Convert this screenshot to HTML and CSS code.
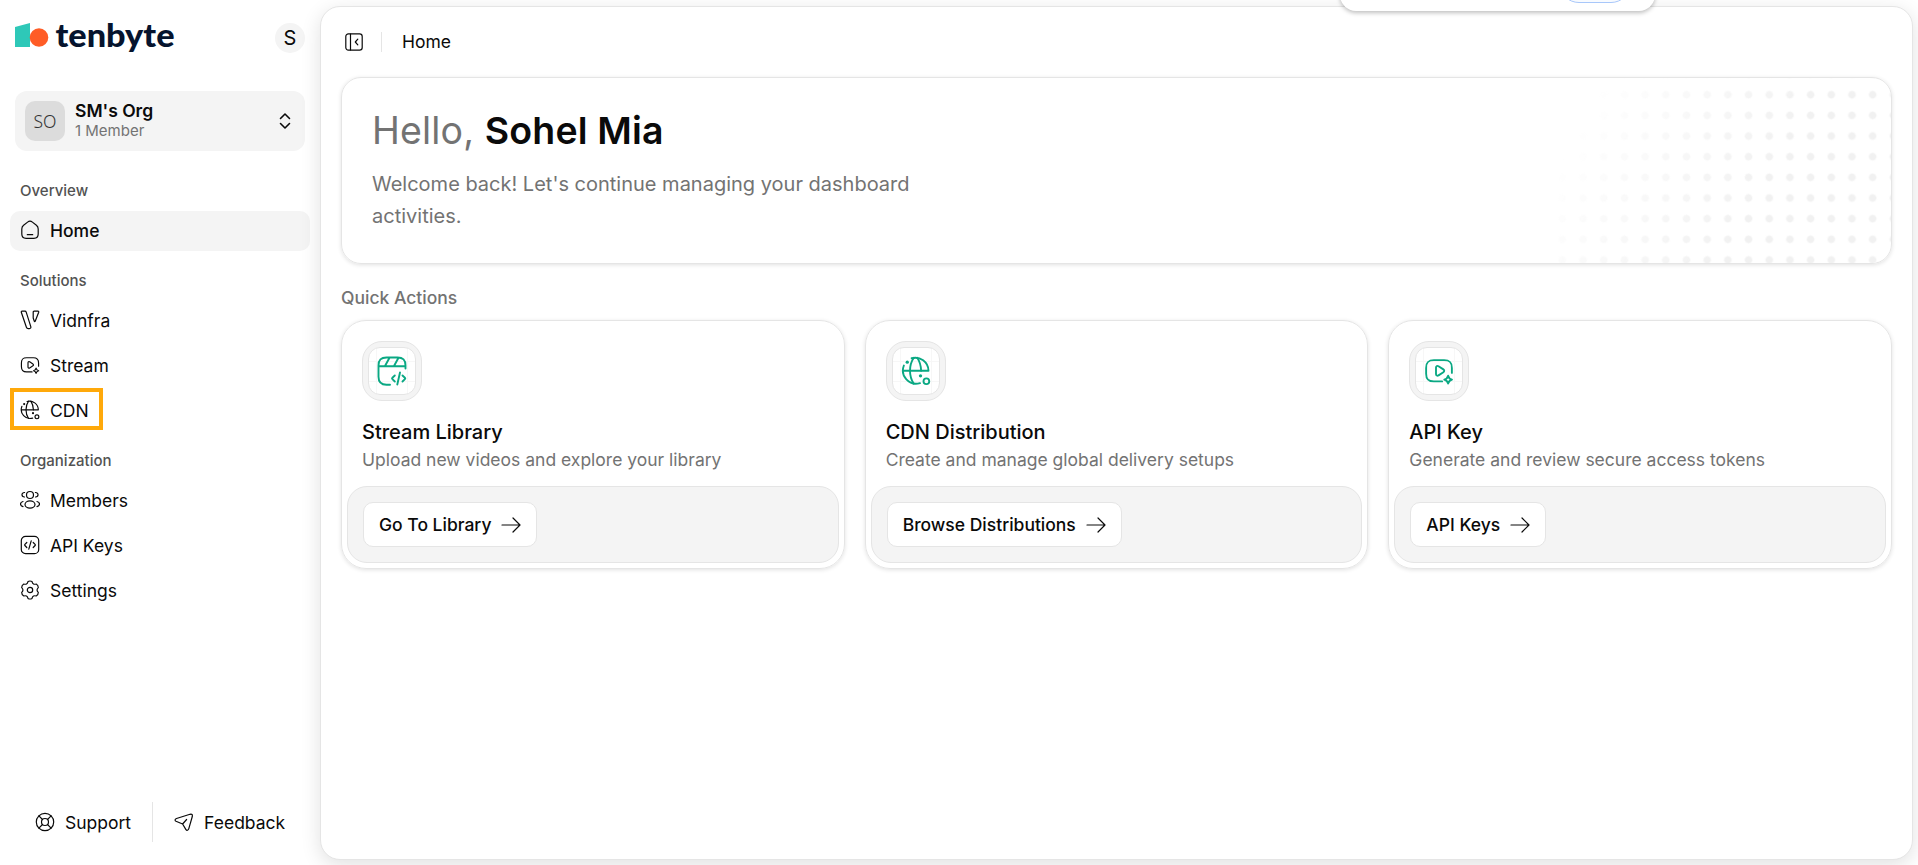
FILE: index.html
```html
<!DOCTYPE html>
<html lang="en">
<head>
  <meta charset="UTF-8">
  <title>Home - tenbyte</title>
  <meta name="viewport" content="width=device-width, initial-scale=1.0">
  <link rel="stylesheet" href="styles.css">
</head>
<body>
  <!-- Shared icons -->
  <svg class="sprite" aria-hidden="true">
    <symbol id="i-play" viewBox="0 0 24 24">
      <path d="M22.3 13.5V9.5c0-4.5-1.7-6.2-6.2-6.2H7.9c-4.5 0-6.2 1.7-6.2 6.2v4.6c0 4.5 1.7 6.2 6.2 6.2h6.6"/>
      <path d="M9.6 9.2v5.2c0 1.2 1 1.7 2 1.1l3.9-2.5c.9-.6.9-1.7 0-2.3l-3.9-2.5c-1-.6-2-.2-2 1z"/>
      <path d="M19.3 15.8c.5 2 1.2 2.6 3.1 3.1-1.9.5-2.6 1.1-3.1 3.1-.5-2-1.2-2.6-3.1-3.1 1.9-.5 2.6-1.1 3.1-3.1z"/>
    </symbol>
    <symbol id="i-globe" viewBox="0 0 24 24">
      <path d="M8.5 1.8A10.6 10.6 0 0 1 22 11.8H1.4M2.3 7.6A10.6 10.6 0 0 0 15.2 21.7"/>
      <path d="M10.2 1.4c-4 6-4 14.8 0 20.8M13 1.4c2 3 3 6.6 3.1 10.4"/>
      <circle cx="20.3" cy="20.2" r="2.3"/>
      <circle class="dot" cx="5" cy="4.9" r="1.3"/>
      <circle class="dot" cx="15.6" cy="15.8" r="1.3"/>
    </symbol>
    <symbol id="i-arrow" viewBox="0 0 20 20">
      <path d="M1 10h18M12 3l7 7-7 7"/>
    </symbol>
  </svg>

  <div class="layout">
    <aside class="sidebar">
      <div class="brand-row">
        <svg class="logo" viewBox="0 0 165 40">
          <path fill="#2ec8b8" d="M0 5 15 1V25H0z"/>
          <circle fill="#ff5c26" cx="24" cy="15.5" r="9.3"/>
          <text x="40.5" y="24.5" textLength="119" lengthAdjust="spacingAndGlyphs">tenbyte</text>
        </svg>
        <div class="avatar">S</div>
      </div>

      <button class="org">
        <span class="org-badge">SO</span>
        <span class="org-info">
          <span class="org-name">SM's Org</span>
          <span class="org-members">1 Member</span>
        </span>
        <svg class="icon chevrons" viewBox="0 0 20 20"><path d="M5.5 7.5 10 3l4.500 4.500M5.500 12.500 10 17l4.500-4.500"/></svg>
      </button>

      <nav class="nav">
        <div class="nav-group">
          <div class="nav-label">Overview</div>
          <a class="nav-item active">
            <svg class="icon" viewBox="0 0 20 20"><path d="M1.8 9c0-1.7.5-2.7 1.8-3.7l4-3.2c1.5-1.2 3.3-1.2 4.8 0l4 3.2c1.3 1 1.8 2 1.8 3.7v5c0 3-1.3 4.3-4.3 4.3H6.100c-3 0-4.300-1.300-4.300-4.300zM7.300 14.700h5.400"/></svg>
            Home
          </a>
        </div>
        <div class="nav-group">
          <div class="nav-label">Solutions</div>
          <a class="nav-item">
            <svg class="icon" viewBox="0 0 20 20"><path d="M1.3 2.2c-.2-.6.1-1 .7-1h3c.6 0 1 .3 1.2.9l4.6 14.5c.3 1.2-.2 2-1.3 2H8.2c-.9 0-1.500-.4-1.800-1.300zM13.200 2.300c0-.7.300-1.100 1-1.100H18c.6 0 .9.400.7 1L15.300 11c-.3.700-.9.700-1.100 0l-1-3z"/></svg>
            Vidnfra
          </a>
          <a class="nav-item">
            <svg class="icon fine"><use href="#i-play"/></svg>
            Stream
          </a>
          <a class="nav-item marked">
            <svg class="icon fine"><use href="#i-globe"/></svg>
            CDN
          </a>
        </div>
        <div class="nav-group">
          <div class="nav-label">Organization</div>
          <a class="nav-item">
            <svg class="icon" viewBox="0 0 20 20"><circle cx="10" cy="5" r="3.5"/><ellipse cx="10" cy="14.5" rx="5" ry="3.6"/><path d="M4.6 2.5C1.3 2.3 1 6.7 4.5 7M15.4 2.5c3.300-.2 3.600 4.200.1 4.500M3 11.500c-3.300.8-3.300 4.400 0 5.200M17 11.500c3.300.8 3.300 4.400 0 5.200"/></svg>
            Members
          </a>
          <a class="nav-item">
            <svg class="icon" viewBox="0 0 20 20"><rect x="1.3" y="1.3" width="17.4" height="17.4" rx="4.3"/><path d="M6.8 7.5 4.9 9.4c-.3.3-.3.8 0 1.1l1.9 2M13.2 7.5l1.9 1.9c.3.3.3.8 0 1.1l-1.900 2M11.200 5.800l-2.400 8.400"/></svg>
            API Keys
          </a>
          <a class="nav-item">
            <svg class="icon" viewBox="0 0 20 20"><circle cx="10" cy="10" r="2.7"/><path d="M8 1.6Q10 .4 12 1.6 12.9 5 16.2 4 18.300 5.200 18.300 7.600 15.800 10 18.300 12.400 18.300 14.800 16.200 16 12.900 15 12 18.400 10 19.600 8 18.400 7.100 15 3.800 16 1.700 14.800 1.700 12.400 4.200 10 1.700 7.600 1.700 5.200 3.800 4 7.100 5 8 1.600z"/></svg>
            Settings
          </a>
        </div>
      </nav>

      <div class="sidebar-footer">
        <a class="foot-link">
          <svg class="icon" viewBox="0 0 20 20"><circle cx="10" cy="10" r="8.7"/><circle cx="10" cy="10" r="3.5"/><path d="m3.9 3.9 3.6 3.6M16.1 3.9l-3.6 3.6M3.9 16.1l3.6-3.6M16.1 16.1l-3.6-3.6"/></svg>
          Support
        </a>
        <span class="foot-sep"></span>
        <a class="foot-link">
          <svg class="icon" viewBox="0 0 20 20"><path d="M2.5 6.5 16 2.3c1.9-.5 2.7.3 2.3 2.2l-3.5 12.2c-.5 1.8-2 2.2-3 .7L8.6 12 2 9.3C.6 8.5.8 7.1 2.5 6.5zM8.6 12l4-4.5"/></svg>
          Feedback
        </a>
      </div>
    </aside>

    <main class="panel">
      <header class="topbar">
        <svg class="icon" viewBox="0 0 20 20"><rect x="1.8" y="1.8" width="16.4" height="16.4" rx="2.6"/><path d="M6.5 2v16M13.8 7.2 11.3 10l2.5 2.8"/></svg>
        <span class="topbar-sep"></span>
        <span class="crumb">Home</span>
      </header>

      <section class="hero">
        <h1>Hello, <strong>Sohel Mia</strong></h1>
        <p>Welcome back! Let's continue managing your dashboard activities.</p>
        <div class="hero-dots"></div>
      </section>

      <h2 class="section-title">Quick Actions</h2>
      <section class="cards">
        <article class="card">
          <div class="card-body">
            <div class="tile"><div class="tile-inner">
              <svg class="icon wide" viewBox="0 0 30 30"><path d="M28.5 12.5V9.5c0-5.5-2.5-8-8-8h-11c-5.5 0-8 2.5-8 8v11.2c0 5.5 2.5 8 8 8h3.5M1.5 10.3h27M12.5 1.8 8 10M21.5 1.8 17 10M17.8 19.5l-2.4 2.2c-.5.5-.5 1 0 1.5l2.4 2.3M25.5 19.5l2.4 2.2c.5.5.5 1 0 1.5l-2.4 2.3M23 16.5l-2.7 12"/></svg>
            </div></div>
            <h3>Stream Library</h3>
            <p>Upload new videos and explore your library</p>
          </div>
          <div class="card-footer">
            <a class="btn">Go To Library <svg class="icon"><use href="#i-arrow"/></svg></a>
          </div>
        </article>

        <article class="card">
          <div class="card-body">
            <div class="tile"><div class="tile-inner">
              <svg class="icon"><use href="#i-globe"/></svg>
            </div></div>
            <h3>CDN Distribution</h3>
            <p>Create and manage global delivery setups</p>
          </div>
          <div class="card-footer">
            <a class="btn">Browse Distributions <svg class="icon"><use href="#i-arrow"/></svg></a>
          </div>
        </article>

        <article class="card">
          <div class="card-body">
            <div class="tile"><div class="tile-inner">
              <svg class="icon"><use href="#i-play"/></svg>
            </div></div>
            <h3>API Key</h3>
            <p>Generate and review secure access tokens</p>
          </div>
          <div class="card-footer">
            <a class="btn">API Keys <svg class="icon"><use href="#i-arrow"/></svg></a>
          </div>
        </article>
      </section>
    </main>
  </div>

  <!-- Popup sliding in from the top edge -->
  <div class="popup"><span class="popup-btn"></span></div>
</body>
</html>
```

FILE: styles.css
```css
:root {
  --text: #0a0a0a;
  --muted: #737373;
  --line: #e5e5e5;
  --soft: #f4f4f4;
  --green: #0aa883;
}
* {
  box-sizing: border-box;
}
body {
  margin: 0;
  height: 100vh;
  overflow: hidden;
  background: #fff;
  color: var(--text);
  font-family: Inter, "Liberation Sans", sans-serif;
  font-size: 17.5px;
  line-height: 25px;
}
h1, h2, h3, p {
  margin: 0;
}
.sprite {
  display: none;
}
.icon {
  width: 20px;
  height: 20px;
  flex: none;
  fill: none;
  stroke: currentColor;
  stroke-width: 1.2;
  stroke-linecap: round;
  stroke-linejoin: round;
}
.icon.fine {
  stroke-width: 1.4;
}
.dot {
  fill: currentColor;
  stroke: none;
}
.layout {
  display: flex;
  height: 100%;
}

/* Sidebar */
.sidebar {
  width: 320px;
  flex: none;
  display: flex;
  flex-direction: column;
  padding: 22px 10px;
}
.brand-row {
  display: flex;
  justify-content: space-between;
  height: 31px;
  padding: 0 5px;
}
.logo {
  width: 165px;
  height: 40px;
  overflow: visible;
}
.logo text {
  font-family: Lato, sans-serif;
  font-size: 33px;
  font-weight: 900;
  fill: #06142e;
}
.avatar {
  width: 30px;
  height: 30px;
  margin-top: 1px;
  border-radius: 50%;
  background: var(--soft);
  font-size: 20px;
  line-height: 30px;
  text-align: center;
}
.org {
  display: flex;
  align-items: center;
  gap: 10px;
  height: 60px;
  margin: 38px 5px 20px;
  padding: 0 10px;
  border: none;
  border-radius: 12px;
  background: var(--soft);
  color: var(--text);
  font-family: inherit;
  text-align: left;
}
.org-badge {
  width: 40px;
  height: 40px;
  border-radius: 10px;
  background: #dcdcdc;
  color: #333;
  font-family: "Noto Sans", sans-serif;
  font-size: 17.5px;
  font-weight: 300;
  line-height: 40px;
  text-align: center;
}
.org-info {
  display: flex;
  flex: 1;
  flex-direction: column;
}
.org-name {
  font-size: 17.5px;
  font-weight: 600;
  line-height: 20px;
}
.org-members {
  color: var(--muted);
  font-size: 15px;
  line-height: 20px;
}
.chevrons {
  stroke-width: 1.6;
}
.nav {
  display: flex;
  flex-direction: column;
  gap: 10px;
}
.nav-label {
  height: 40px;
  padding-left: 10px;
  color: #525252;
  font-size: 15px;
  font-weight: 500;
  line-height: 39px;
}
.nav-item {
  display: flex;
  align-items: center;
  gap: 10px;
  height: 40px;
  padding: 0 10px 2px;
  border-radius: 10px;
}
.nav-item + .nav-item {
  margin-top: 5px;
}
.nav-item.active {
  background: var(--soft);
  font-weight: 500;
}
.nav-item.marked {
  width: 93px;
  height: 42px;
  margin: 2px 0 1px;
  padding: 2px 10px 0;
  outline: 4px solid #ffa90a;
  outline-offset: -4px;
  border-radius: 0;
}
.sidebar-footer {
  display: flex;
  align-items: center;
  margin-top: auto;
  height: 40px;
  margin-bottom: 1px;
  padding-left: 25px;
}
.foot-link {
  display: flex;
  align-items: center;
  gap: 10px;
}
.foot-sep {
  width: 1px;
  height: 40px;
  margin: 0 21px;
  background: var(--line);
}

/* Main panel */
.panel {
  flex: 1;
  margin: 6px 5px 5px 0;
  padding: 0 20px;
  border: 1px solid var(--line);
  border-radius: 20px;
  background: #fff;
  box-shadow: 0 5px 20px rgba(0, 0, 0, 0.12);
}
.topbar {
  display: flex;
  align-items: center;
  height: 70px;
  padding: 0 0 1px 3px;
}
.topbar-sep {
  width: 1px;
  height: 20px;
  margin: 0 20px 0 17px;
  background: var(--line);
}
.hero {
  position: relative;
  height: 187px;
  padding: 30px;
  border: 1px solid var(--line);
  border-radius: 20px;
  box-shadow: 0 1px 4px rgba(0, 0, 0, 0.12);
  overflow: hidden;
}
.hero h1 {
  color: var(--muted);
  font-size: 37.5px;
  font-weight: 400;
  letter-spacing: 0.15px;
  line-height: 45px;
}
.hero strong {
  color: var(--text);
  font-weight: 600;
}
.hero p {
  width: 560px;
  margin-top: 15px;
  color: var(--muted);
  font-size: 20px;
  line-height: 32px;
}
.hero-dots {
  position: absolute;
  inset: 0 0 0 auto;
  width: 340px;
  background: radial-gradient(circle, #f1f1f1 3px, transparent 4.5px) 1px 6.4px / 20.7px 20.66px;
  mask-image: linear-gradient(118deg, transparent 12%, #000 62%);
}
.section-title {
  margin: 21px 0 10px;
  color: var(--muted);
  font-size: 17.5px;
  font-weight: 500;
}
.cards {
  display: grid;
  grid-template-columns: repeat(3, 1fr);
  gap: 20px;
}
.card {
  height: 249px;
  padding: 5px;
  border: 1px solid var(--line);
  border-radius: 25px;
  box-shadow: 0 1px 4px rgba(0, 0, 0, 0.12);
}
.card-body {
  height: 160px;
  padding: 15px;
}
.tile {
  width: 60px;
  height: 60px;
  padding: 5px;
  border: 1px solid var(--line);
  border-radius: 20px;
  background: var(--soft);
}
.tile-inner {
  display: flex;
  align-items: center;
  justify-content: center;
  height: 48px;
  border: 1px solid var(--line);
  border-radius: 12px;
  background:
    linear-gradient(#f7f7f7, #f7f7f7) 7px 0 / 1px 100% no-repeat,
    linear-gradient(#f7f7f7, #f7f7f7) 38px 0 / 1px 100% no-repeat,
    linear-gradient(#f7f7f7, #f7f7f7) 0 13px / 100% 1px no-repeat,
    linear-gradient(#f7f7f7, #f7f7f7) 0 33px / 100% 1px no-repeat,
    #fff;
  color: var(--green);
}
.tile .icon {
  width: 30px;
  height: 30px;
  stroke-width: 1.5;
}
.tile .icon.wide {
  stroke-width: 1.9;
}
.card h3 {
  margin-top: 17px;
  font-size: 20px;
  font-weight: 500;
  line-height: 28px;
}
.card p {
  color: var(--muted);
  line-height: 28px;
}
.card-footer {
  height: 77px;
  padding: 15px;
  border: 1px solid var(--line);
  border-radius: 20px;
  background: var(--soft);
}
.btn {
  display: inline-flex;
  align-items: center;
  gap: 10px;
  height: 45px;
  padding: 0 15px;
  border: 1px solid var(--line);
  border-radius: 10px;
  background: #fff;
  font-weight: 500;
}

/* Popup peeking in at the top */
.popup {
  position: absolute;
  top: -40px;
  left: 1340px;
  width: 315px;
  height: 51px;
  border-radius: 16px;
  background: #fff;
  box-shadow: 0 2px 4px rgba(0, 0, 0, 0.25);
}
.popup-btn {
  position: absolute;
  right: 24px;
  bottom: 8px;
  width: 72px;
  height: 40px;
  border: 1px solid #a8c7fa;
  border-radius: 20px;
  background: #f8fbff;
}
```
